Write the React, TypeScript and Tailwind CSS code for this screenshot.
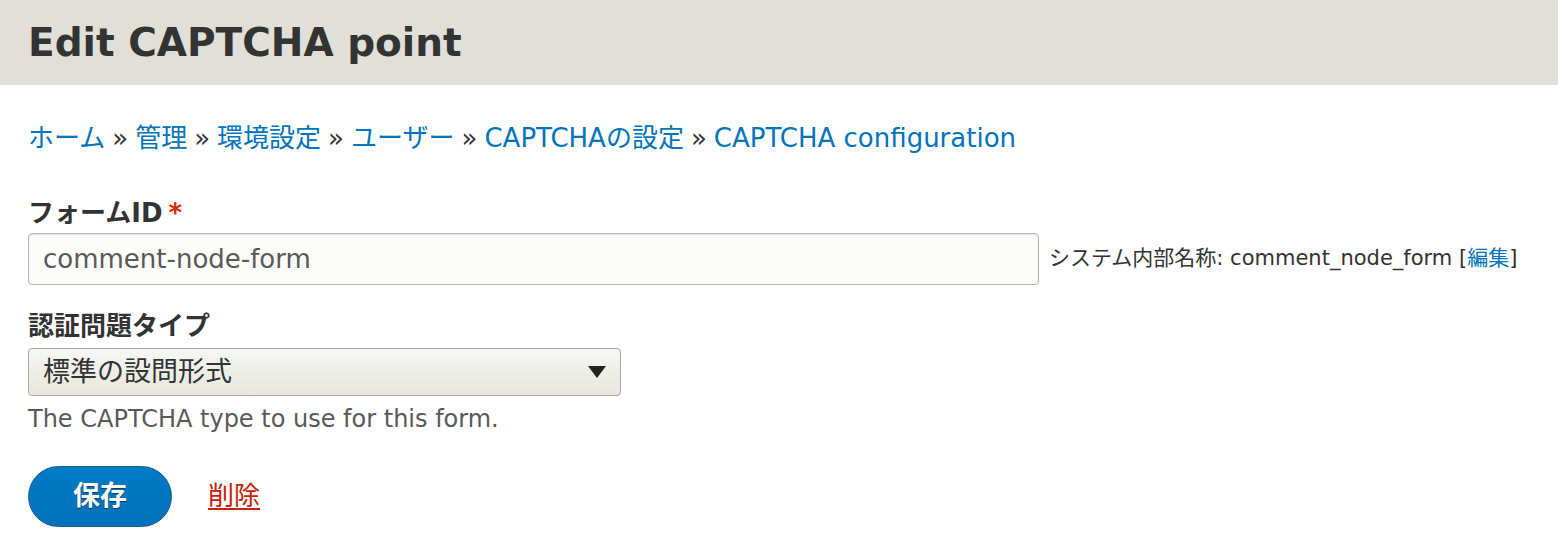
const font = "font-['DejaVu_Sans','Noto_Sans_CJK_JP',sans-serif]";

const Crumb = ({ label }: { label: string }) => (
  <a href="#" className="text-[#0074bd] no-underline">
    {label}
  </a>
);

const Sep = () => <span className="mx-[7px] text-[#333]">»</span>;

export default function App() {
  return (
    <div className={`${font} min-h-[544px] bg-white text-[#333]`}>
      <header className="flex h-[85px] items-center bg-[#e0e0d8] px-[28px]">
        <h1 className="text-[39px] font-bold leading-none text-[#333]">Edit CAPTCHA point</h1>
      </header>

      <main className="px-[28px]">
        <nav className="mt-[36px] flex h-[34px] items-center text-[26px]">
          <Crumb label="ホーム" />
          <Sep />
          <Crumb label="管理" />
          <Sep />
          <Crumb label="環境設定" />
          <Sep />
          <Crumb label="ユーザー" />
          <Sep />
          <Crumb label="CAPTCHAの設定" />
          <Sep />
          <Crumb label="CAPTCHA configuration" />
        </nav>

        <form className="mt-[43px]">
          <label className="flex h-[30px] items-center text-[26px] font-bold">
            フォームID
            <span className="ml-[6px] text-[#e32700]">*</span>
          </label>
          <div className="mt-[5px] flex items-center">
            <input
              readOnly
              value="comment-node-form"
              className="h-[52px] w-[1011px] rounded-[4px] border border-[#b8b8b8] bg-[#fcfcfa] px-[14px] text-[26px] text-[#595959] shadow-[inset_0_1px_2px_rgba(0,0,0,0.12)] outline-none"
            />
            <span className="ml-[10px] text-[21px] text-[#333]">
              システム内部名称: comment_node_form [
              <a href="#" className="text-[#0074bd]">
                編集
              </a>
              ]
            </span>
          </div>

          <label className="mt-[26px] flex h-[30px] items-center text-[26px] font-bold">認証問題タイプ</label>
          <div className="mt-[7px] flex h-[48px] w-[593px] items-center justify-between rounded-[4px] border border-[#a6a6a6] bg-gradient-to-b from-[#f6f6f3] to-[#e7e7df] pl-[14px] pr-[14px] text-[27px] text-[#333]">
            <span>標準の設問形式</span>
            <svg width="18" height="12" viewBox="0 0 18 12" aria-hidden="true">
              <path d="M0 0H18L9 12Z" fill="#222" />
            </svg>
          </div>
          <p className="mt-[8px] flex h-[30px] items-center text-[24px] text-[#595959]">
            The CAPTCHA type to use for this form.
          </p>

          <div className="mt-[32px] flex items-center">
            <button
              type="button"
              className="h-[61px] w-[144px] rounded-full border border-[#1e5c90] bg-gradient-to-b from-[#007bc6] to-[#0071b8] text-[27px] font-bold text-white [text-shadow:0_1px_1px_rgba(0,0,0,0.5)]"
            >
              保存
            </button>
            <a href="#" className="ml-[36px] text-[26px] text-[#c72100] underline underline-offset-[3px]">
              削除
            </a>
          </div>
        </form>
      </main>
    </div>
  );
}
